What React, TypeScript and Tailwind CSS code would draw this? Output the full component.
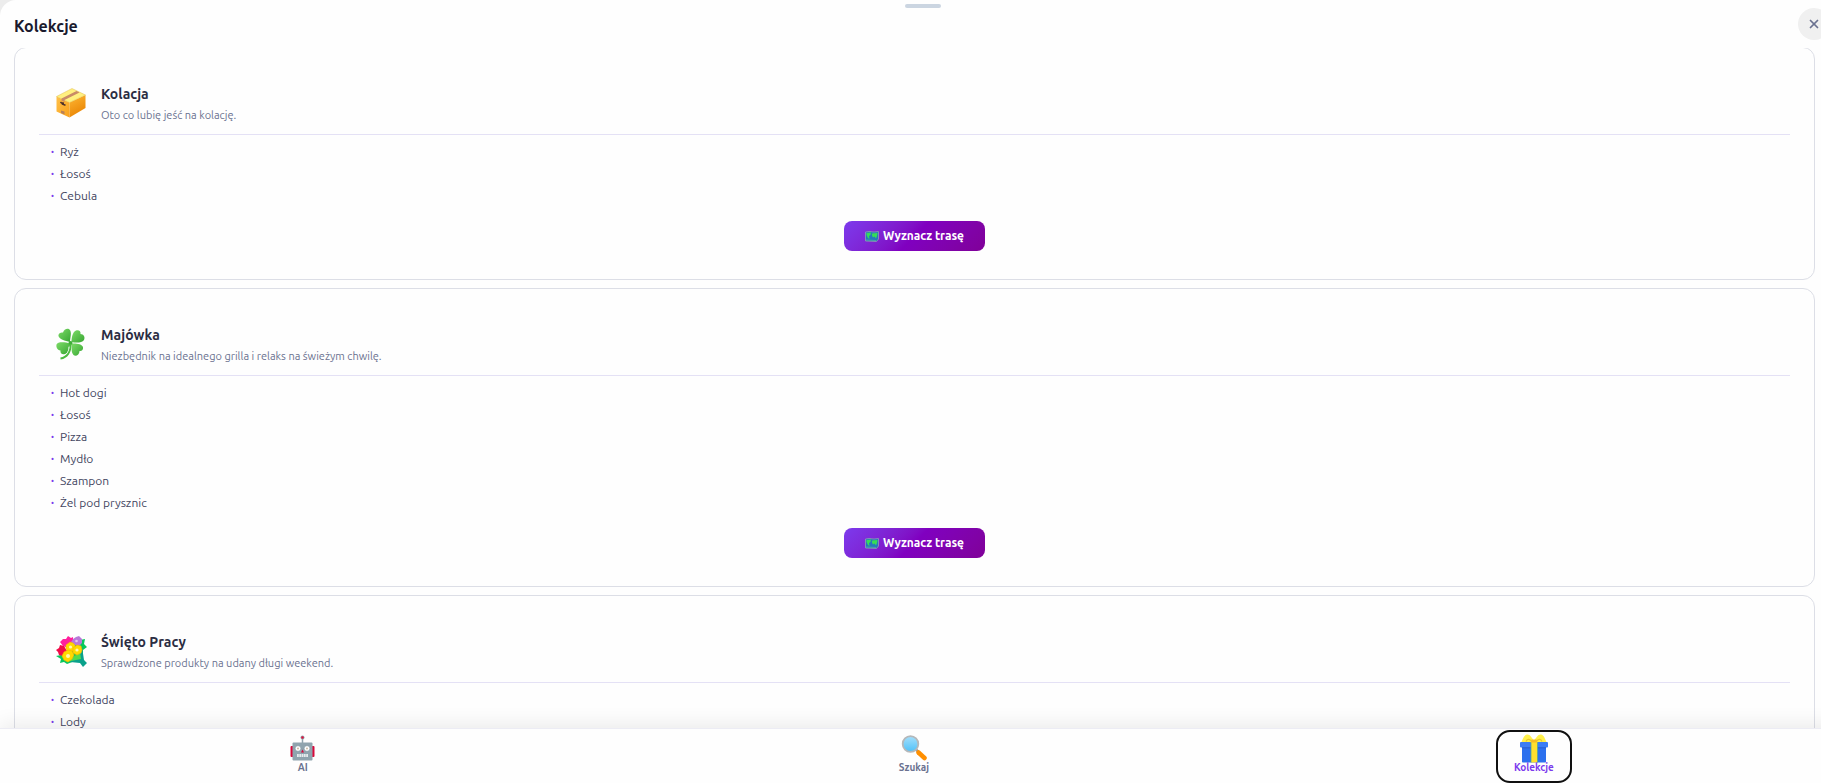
import { useState } from 'react';
import { X } from 'lucide-react';

const BoxIcon = () => (
    <svg viewBox="0 0 30 30" className="h-[30px] w-[30px]" aria-hidden="true">
        <defs>
            <linearGradient id="boxFront" x1="0" y1="0" x2="1" y2="1">
                <stop offset="0" stopColor="#ffc14a" />
                <stop offset="1" stopColor="#f9a11b" />
            </linearGradient>
            <linearGradient id="boxSide" x1="0" y1="0" x2="0.4" y2="1">
                <stop offset="0" stopColor="#ffb835" />
                <stop offset="1" stopColor="#e98504" />
            </linearGradient>
        </defs>
        <path d="M.5 8.5 13.5 14.5V29.5L.5 23.5Z" fill="url(#boxFront)" />
        <path d="M13.5 14.5 29.5 7V20L13.5 29.5Z" fill="url(#boxSide)" />
        <path d="M16 .5 29.5 7 13.5 14.5 .5 8.5Z" fill="#fff07f" stroke="#e3bd51" strokeWidth=".5" />
        <path d="M20.5 3 23.5 4.4 8.5 12V14L5.5 12.5V10.6Z" fill="#c98b66" />
        <path d="M4.5 14 6.5 16.2 9.5 17.2M5 14.8l3 .5" stroke="#4c2f2a" strokeWidth="1.5" fill="none" />
        <path d="M5 22.5 8.5 23.5V26.5L5 25Z" fill="#b98058" />
    </svg>
);

const CloverIcon = () => (
    <svg viewBox="0 0 30 32" className="h-8 w-[30px]" aria-hidden="true">
        <defs>
            <linearGradient id="clover" x1="0" y1="0" x2="1" y2="1">
                <stop offset="0" stopColor="#7ddb68" />
                <stop offset="1" stopColor="#37a632" />
            </linearGradient>
        </defs>
        <g fill="url(#clover)">
            <path d="M14 14C9 13 3 11 2.500 8 2 5 5 4 7 4.500 8 1 12-.500 14 2c2 3 0 8 0 12Z" />
            <path d="M15.500 14c0-4 1-10 4.500-11.500 3-1 5 1 4.500 3.500 3 0 5 3 3.500 6-2 3-8 3-12.500 2Z" />
            <path d="M14 15.500C14 20 13 25 9 26c-3 1-5-1-4.500-3.500C1 22 0 19 .500 16.500 1.500 13.500 9 14 14 15.500Z" />
            <path d="M15.500 15.500C20 15 26 16 27 19c.500 3-1.500 4.500-3.500 4 0 4-4 6-6 4-2.500-3-2-8-2-11.500Z" />
        </g>
        <circle cx="14.500" cy="15" r="2" fill="#3fae39" />
        <path d="M14 18.500C14.500 24 11 29 5 30.500" stroke="#fff" strokeWidth="3" fill="none" />
        <path d="M14.500 16C15 24 11 29.500 4.500 30.500" stroke="#4dba40" strokeWidth="1.800" fill="none" />
    </svg>
);

const BouquetIcon = () => (
    <svg viewBox="0 0 31 31" className="h-[31px] w-[31px]" aria-hidden="true">
        <path d="M24 4l5-1-1 5 3 3-4 3v10l-2 2-6-1-8 3-3-2-4 1 1-4-5-3 5-1Z" fill="#08c75c" />
        <path d="M26 11 28 24 31 27 27 31 24 27 14 26Z" fill="#0aa18b" />
        <path d="M10 26 24 16 25 23Z" fill="#54db4c" />
        <path d="M7 3l3 0 2-3 3 2 2-1 0 6-5 5-5-2-3-4Z" fill="#ff1f9c" />
        <path d="M17 3l3-2 3-1 3 3 0 4-3 3-5-1-3-3Z" fill="#b879d8" />
        <path d="M4 9l4 1 3 5-4 5-4-1-1-3-2-2 3-2Z" fill="#f10b48" />
        <g fill="#ffd900" stroke="#f6b500" strokeWidth=".6">
            <path d="M14 6l3 1 2 2 0 3-2 3-4 1-3-3 0-4Z" />
            <path d="M21 9l4 1 1 4-1 3-4 2-4-2 0-5Z" />
            <path d="M12 14l4 1 2 4-2 4-4 3-4-2-2-4 2-4Z" />
        </g>
        <circle cx="14.500" cy="11" r="1.600" fill="#fff9b0" />
        <circle cx="21" cy="14" r="1.600" fill="#fff9b0" />
        <circle cx="12" cy="20" r="2" fill="#fff9b0" />
        <circle cx="20.500" cy="5" r="1.300" fill="#e2c4f2" />
    </svg>
);

const MapIcon = () => (
    <svg viewBox="0 0 14 11" className="h-[11px] w-3.5" aria-hidden="true">
        <path d="M.5 1 4 .5 9 1 13.500 .5V8L11.500 10.500.500 10Z" fill="#2677bd" stroke="#8f9fb0" strokeWidth=".8" />
        <path d="M1.500 2 6 1.500 5.500 4 4 5 4.500 8 3 7 1.500 4ZM7 2.500 12.500 2 12 5 11 7.500 9.500 5.500 8 6.500 7 4.500Z" fill="#36dd56" />
        <path d="M1 9 11 9.500" stroke="#4fae9f" strokeWidth=".8" />
    </svg>
);

const RobotIcon = () => (
    <svg viewBox="0 0 25 26" className="h-[26px] w-[25px]" aria-hidden="true">
        <path d="M12.500 3V8" stroke="#90a4ae" strokeWidth="1.500" />
        <circle cx="12.500" cy="2.500" r="2" fill="#90a4ae" />
        <circle cx="12.500" cy="2.500" r="1.200" fill="#e0103c" />
        <rect x=".5" y="11" width="3" height="11" rx="1" fill="#d8083a" />
        <rect x="21.500" y="11" width="3" height="11" rx="1" fill="#d8083a" />
        <rect x="2.500" y="7.500" width="20" height="18" rx="1" fill="#90a4ae" />
        <circle cx="8" cy="13.500" r="2.800" fill="#fff" stroke="#78909c" strokeWidth=".5" />
        <circle cx="17" cy="13.500" r="2.800" fill="#fff" stroke="#78909c" strokeWidth=".5" />
        <circle cx="8" cy="13.500" r=".9" fill="#c3b49a" />
        <circle cx="17" cy="13.500" r=".9" fill="#c3b49a" />
        <path d="M12.500 14.500 14 17.500H11Z" fill="#d8083a" />
        <path d="M7 20.500H18" stroke="#e7ecee" strokeWidth="3" strokeDasharray="1.800 .5" />
    </svg>
);

const SearchIcon = () => (
    <svg viewBox="0 0 26 26" className="h-[26px] w-[26px]" aria-hidden="true">
        <defs>
            <linearGradient id="lens" x1="0" y1="0" x2="0" y2="1">
                <stop offset="0" stopColor="#a4dffc" />
                <stop offset="1" stopColor="#4fc1f8" />
            </linearGradient>
        </defs>
        <path d="M14.500 14 18 17.500" stroke="#9a9a9a" strokeWidth="2.500" />
        <path d="M17.500 17.500 23.500 23" stroke="#ff8f00" strokeWidth="4.500" strokeLinecap="round" />
        <circle cx="9.500" cy="9" r="7.800" fill="url(#lens)" stroke="#b5b8ba" strokeWidth="1.800" />
    </svg>
);

const GiftIcon = () => (
    <svg viewBox="0 0 28 29" className="h-[29px] w-7" aria-hidden="true">
        <rect x="2" y="12" width="24" height="16.500" rx=".8" fill="#2c70ee" />
        <rect x="0" y="8" width="28" height="5.500" rx="1" fill="#3b7df5" />
        <path d="M2 13.800H26" stroke="#2459c7" strokeWidth=".8" />
        <path d="M1.500 8C3 5 4 1 7 .5 10 0 12 4 14 7 16 4 18 0 21 .5 24 1 25 5 26.500 8Z" fill="#fff04a" />
        <path d="M6 7.500C7 5 9 4.500 12 7.500M22 7.500C21 5 19 4.500 16 7.500" stroke="#e9c62d" strokeWidth="1.200" fill="none" />
        <rect x="11" y="8" width="6.500" height="20.500" fill="#ffe02f" />
        <path d="M11 8V28.500M17.500 8V28.500" stroke="#58a98e" strokeWidth=".8" />
        <path d="M11.500 5.500H16.500L17.500 8.500H10.500Z" fill="#f7bd25" />
    </svg>
);

const collections = [
    {
        icon: <BoxIcon />,
        name: 'Kolacja',
        description: 'Oto co lubię jeść na kolację.',
        items: ['Ryż', 'Łosoś', 'Cebula'],
    },
    {
        icon: <CloverIcon />,
        name: 'Majówka',
        description: 'Niezbędnik na idealnego grilla i relaks na świeżym chwilę.',
        items: ['Hot dogi', 'Łosoś', 'Pizza', 'Mydło', 'Szampon', 'Żel pod prysznic'],
    },
    {
        icon: <BouquetIcon />,
        name: 'Święto Pracy',
        description: 'Sprawdzone produkty na udany długi weekend.',
        items: ['Czekolada', 'Lody'],
    },
];

const tabs = [
    { id: 'ai', icon: <RobotIcon />, label: 'AI', width: 'w-[55px]' },
    { id: 'search', icon: <SearchIcon />, label: 'Szukaj', width: 'w-[67px]' },
    { id: 'collections', icon: <GiftIcon />, label: 'Kolekcje', width: 'w-[72px]' },
];

export default function App() {
    const [active, setActive] = useState('collections');

    return (
        <div className="h-screen overflow-hidden bg-[#ececec] font-['Ubuntu','Noto_Sans',sans-serif]">
            <div className="-mr-6 flex h-full flex-col rounded-tl-2xl bg-[#fefefe]">
                <header className="flex h-12 shrink-0 flex-col">
                    <div className="mx-auto mt-1 h-1 w-9 shrink-0 rounded-sm bg-[#cbd5e1]" />
                    <div className="flex h-8 items-center justify-between pl-3.5 pr-[15px]">
                        <h1 className="pt-1 text-base font-bold text-[#1a1a2e]">Kolekcje</h1>
                        <button
                            aria-label="Zamknij"
                            className="flex h-8 w-8 items-center justify-center rounded-full bg-[#f0f0f0] text-[#6b7290]"
                        >
                            <X className="h-3.5 w-3.5" strokeWidth={3} />
                        </button>
                    </div>
                </header>

                <main className="min-h-0 flex-1 overflow-y-auto pl-3.5 pr-[30px] [scrollbar-width:none]">
                    <div className="-mt-px flex flex-col gap-2">
                        {collections.map((c) => (
                            <section key={c.name} className="rounded-xl border border-[#dcdee6] p-6">
                                <div className="flex h-[63px] items-center gap-3.5 border-b border-[#e4e1f5] pl-4">
                                    <span className="flex w-8 justify-center">{c.icon}</span>
                                    <div className="pt-1">
                                        <h2 className="text-sm font-bold leading-5 text-[#2b2d42]">{c.name}</h2>
                                        <p className="text-[11px] leading-[22px] text-[#6b7290]">{c.description}</p>
                                    </div>
                                </div>
                                <ul className="pl-3 pt-1.5">
                                    {c.items.map((item) => (
                                        <li key={item} className="flex h-[22px] items-center gap-1.5 text-xs text-[#42455f]">
                                            <span className="font-bold text-[#7c3aed]">·</span>
                                            {item}
                                        </li>
                                    ))}
                                </ul>
                                <button className="mx-auto mb-1 mt-3.5 flex h-[30px] w-[141px] items-center justify-center gap-1 rounded-lg bg-linear-135 from-[#7c3aed] via-[#8000c0] to-[#800098] text-xs font-bold text-white">
                                    <MapIcon />
                                    Wyznacz trasę
                                </button>
                            </section>
                        ))}
                    </div>
                </main>

                <nav className="relative flex h-[55px] shrink-0 items-center justify-around border-t border-[#ececf4] bg-[#fefefe] pt-px shadow-[0_-4px_20px_rgba(0,0,0,0.08)]">
                    {tabs.map((tab) => (
                        <button
                            key={tab.id}
                            onClick={() => setActive(tab.id)}
                            className={`flex h-[49px] flex-col items-center rounded-xl pt-0.5 ${tab.width} ${
                                active === tab.id ? 'text-[#7c3aed] outline-2 outline-[#101010]' : 'text-[#6b7290]'
                            }`}
                        >
                            <span className="flex h-7 items-center">{tab.icon}</span>
                            <span className="text-[10px] font-bold leading-3">{tab.label}</span>
                        </button>
                    ))}
                </nav>
            </div>
        </div>
    );
}
